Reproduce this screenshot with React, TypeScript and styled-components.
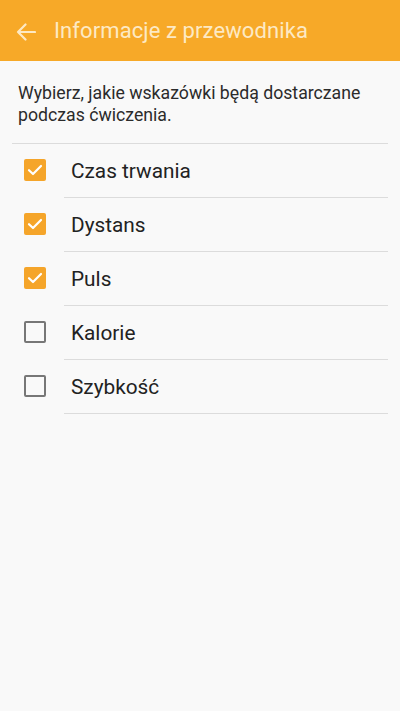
import styled, { createGlobalStyle } from "styled-components";

const GlobalStyle = createGlobalStyle`
  html, body {
    margin: 0;
    padding: 0;
    background: #f9f9f9;
  }
  body {
    font-family: Roboto, "Noto Sans", sans-serif;
  }
`;

const options = [
  { label: "Czas trwania", checked: true },
  { label: "Dystans", checked: true },
  { label: "Puls", checked: true },
  { label: "Kalorie", checked: false },
  { label: "Szybkość", checked: false },
];

const App = () => {
  return (
    <Screen>
      <GlobalStyle />
      <Header>
        <BackButton>
          <svg width="20" height="18" viewBox="0 0 20 18" fill="none">
            <path
              d="M19 9H2M9.5 1.5L2 9l7.5 7.5"
              stroke="#fde9c4"
              strokeWidth="2.2"
              strokeLinecap="round"
              strokeLinejoin="round"
            />
          </svg>
        </BackButton>
        <Title>Informacje z przewodnika</Title>
      </Header>
      <Description>
        Wybierz, jakie wskazówki będą dostarczane podczas ćwiczenia.
      </Description>
      <List>
        {options.map((item) => (
          <Row key={item.label}>
            <CheckCell>
              <CheckBox $checked={item.checked}>
                {item.checked && (
                  <svg width="16" height="12" viewBox="0 0 16 12" fill="none">
                    <path
                      d="M2 6.2l4 3.8 8-8"
                      stroke="#fff"
                      strokeWidth="2.2"
                      strokeLinecap="round"
                      strokeLinejoin="round"
                    />
                  </svg>
                )}
              </CheckBox>
            </CheckCell>
            <Label>{item.label}</Label>
          </Row>
        ))}
      </List>
    </Screen>
  );
};

const Screen = styled.div`
  width: 400px;
  min-height: 711px;
  background: #f9f9f9;
`;
const Header = styled.div`
  height: 61px;
  display: flex;
  align-items: center;
  background-color: #f7a928;
  padding-left: 16px;
  box-sizing: border-box;
`;
const BackButton = styled.div`
  width: 20px;
  height: 18px;
  display: flex;
  margin-top: 2px;
  margin-right: 18px;
`;
const Title = styled.h1`
  margin: 0;
  font-size: 22px;
  font-weight: 400;
  color: #fde9c4;
  letter-spacing: 0.1px;
`;
const Description = styled.p`
  margin: 0 12px;
  padding: 21px 6px 17px;
  font-size: 17.7px;
  line-height: 22px;
  color: #2b2b2b;
  border-bottom: 1px solid #dcdcdc;
`;
const List = styled.div`
  display: flex;
  flex-direction: column;
`;
const Row = styled.div`
  height: 54px;
  display: flex;
  align-items: stretch;
`;
const CheckCell = styled.div`
  width: 64px;
  display: flex;
  align-items: center;
  padding-left: 24px;
  padding-bottom: 2px;
  box-sizing: border-box;
`;
const CheckBox = styled.div<{ $checked: boolean }>`
  width: 22px;
  height: 22px;
  box-sizing: border-box;
  border-radius: 2px;
  display: flex;
  align-items: center;
  justify-content: center;
  background-color: ${({ $checked }) => ($checked ? "#f5a52a" : "transparent")};
  border: ${({ $checked }) => ($checked ? "none" : "2px solid #777")};
`;
const Label = styled.div`
  flex: 1;
  margin-right: 12px;
  display: flex;
  align-items: center;
  padding-left: 7px;
  font-size: 20.8px;
  color: #222;
  border-bottom: 1px solid #dcdcdc;
`;

export default App;
